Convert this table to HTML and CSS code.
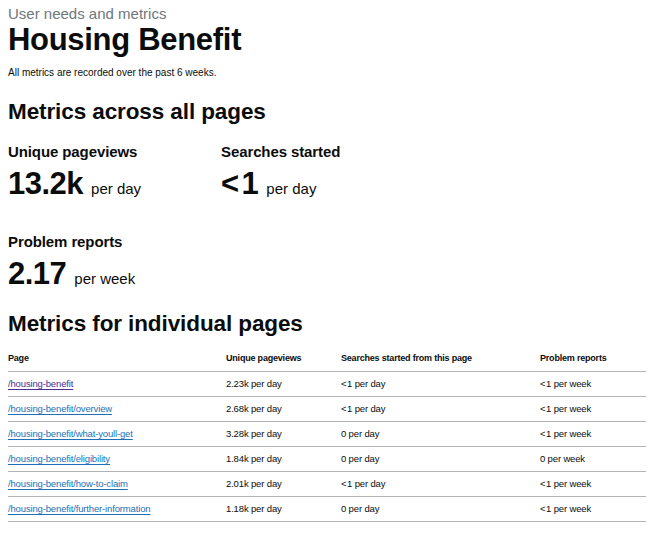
FILE: index.html
```html
<!DOCTYPE html>
<html lang="en">
<head>
<meta charset="utf-8">
<title>Housing Benefit</title>
<link rel="stylesheet" href="styles.css">
</head>
<body>
<main class="page">
  <header class="title-block">
    <span class="caption">User needs and metrics</span>
    <h1 class="title">Housing Benefit</h1>
  </header>
  <p class="note">All metrics are recorded over the past 6 weeks.</p>

  <h2 class="section-title">Metrics across all pages</h2>
  <div class="metrics">
    <div class="metric">
      <h3 class="metric-label">Unique pageviews</h3>
      <p class="metric-value"><span class="big">13.2k</span><span class="unit">per day</span></p>
    </div>
    <div class="metric">
      <h3 class="metric-label">Searches started</h3>
      <p class="metric-value"><span class="big"><span class="lt">&lt;</span>1</span><span class="unit">per day</span></p>
    </div>
    <div class="metric">
      <h3 class="metric-label">Problem reports</h3>
      <p class="metric-value"><span class="big">2.17</span><span class="unit">per week</span></p>
    </div>
  </div>

  <h2 class="section-title section-title--table">Metrics for individual pages</h2>
  <table class="table">
    <thead>
      <tr>
        <th class="col-page">Page</th>
        <th class="col-views">Unique pageviews</th>
        <th class="col-searches">Searches started from this page</th>
        <th class="col-problems">Problem reports</th>
      </tr>
    </thead>
    <tbody>
      <tr><td><a class="link link--visited" href="#">/housing-benefit</a></td><td>2.23k per day</td><td>&lt;&#8202;1 per day</td><td>&lt;&#8202;1 per week</td></tr>
      <tr><td><a class="link" href="#a">/housing-benefit/overview</a></td><td>2.68k per day</td><td>&lt;&#8202;1 per day</td><td>&lt;&#8202;1 per week</td></tr>
      <tr><td><a class="link" href="#b">/housing-benefit/what-youll-get</a></td><td>3.28k per day</td><td>0 per day</td><td>&lt;&#8202;1 per week</td></tr>
      <tr><td><a class="link" href="#c">/housing-benefit/eligibility</a></td><td>1.84k per day</td><td>0 per day</td><td>0 per week</td></tr>
      <tr><td><a class="link" href="#d">/housing-benefit/how-to-claim</a></td><td>2.01k per day</td><td>&lt;&#8202;1 per day</td><td>&lt;&#8202;1 per week</td></tr>
      <tr><td><a class="link" href="#e">/housing-benefit/further-information</a></td><td>1.18k per day</td><td>0 per day</td><td>&lt;&#8202;1 per week</td></tr>
    </tbody>
  </table>
</main>
</body>
</html>
```
FILE: styles.css
```css
* { box-sizing: border-box; }
body {
  margin: 0;
  padding: 0 7px 0 8px;
  font-family: "Liberation Sans", Arial, sans-serif;
  color: #0b0c0c;
  background: #fff;
}
.title-block { display: flex; flex-direction: column; padding-top: 5px; }
.caption {
  font-size: 15px;
  line-height: 18px;
  color: #6f777b;
}
.title {
  margin: 0;
  font-size: 31px;
  line-height: 34px;
  font-weight: 700;
  letter-spacing: -0.3px;
}
.note {
  margin: 9px 0 0;
  font-size: 10px;
  line-height: 14px;
}
.section-title {
  margin: 18px 0 0;
  font-size: 22.5px;
  line-height: 28px;
  font-weight: 700;
  letter-spacing: -0.1px;
}
.metrics {
  display: grid;
  grid-template-columns: 213px 213px;
  row-gap: 26px;
  margin-top: 16px;
}
.metric-label {
  margin: 0;
  font-size: 15px;
  line-height: 20px;
  font-weight: 700;
  letter-spacing: -0.1px;
}
.metric-value {
  margin: 5px 0 0;
  line-height: 34px;
  display: flex;
  align-items: baseline;
  gap: 8px;
}
.big { font-size: 31px; font-weight: 700; letter-spacing: -0.5px; }
.lt { margin-right: 3px; }
.unit { font-size: 15px; }
.section-title--table { margin-top: 14px; }
.table {
  width: 638px;
  border-collapse: collapse;
  margin-top: 7px;
  font-size: 9.5px;
}
.table th, .table td {
  text-align: left;
  padding: 0;
  height: 25px;
  border-bottom: 1px solid #b1b4b6;
  vertical-align: middle;
}
.table td { letter-spacing: -0.15px; }
.table th { font-weight: 700; height: 26px; font-size: 9px; letter-spacing: -0.2px; }
.col-page { width: 218px; }
.col-views { width: 115px; }
.col-searches { width: 199px; }
.col-problems { width: 106px; }
.link { color: #1d70b8; text-decoration: underline; text-underline-offset: 2px; }
.link--visited { color: #4c2c92; }
```
